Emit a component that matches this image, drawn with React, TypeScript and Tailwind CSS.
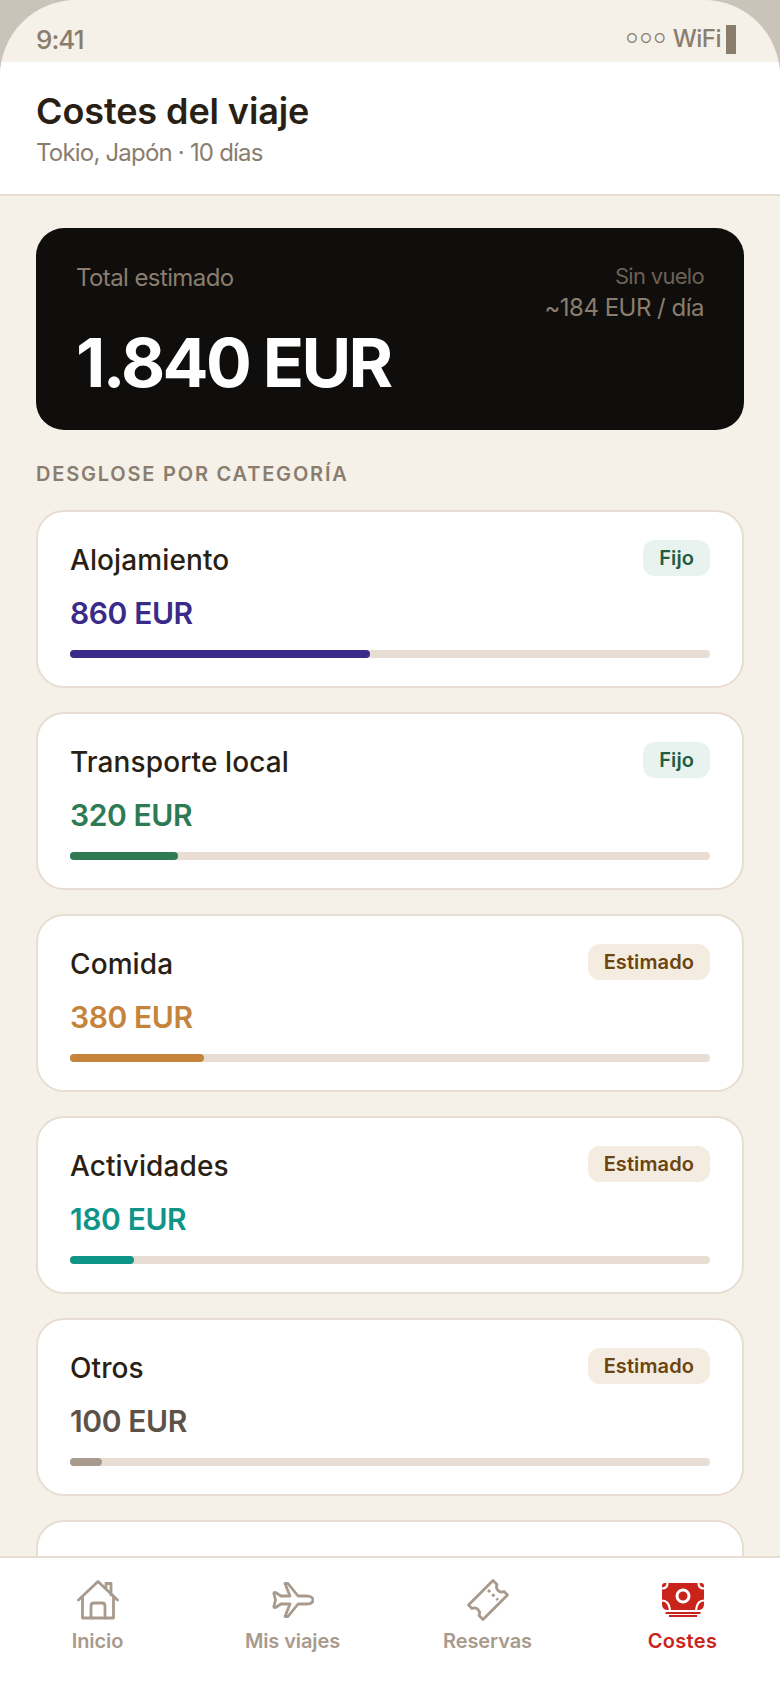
import React from "react";

const FONT = "font-['Inter','Noto_Sans',sans-serif]";

type Row = { name: string; amount: string; color: string; bar: string; w: string; tag: "Fijo" | "Estimado" };

function Card({ name, amount, color, bar, w, tag }: Row) {
  const fijo = tag === "Fijo";
  return (
    <div className="relative h-[178px] shrink-0 rounded-[28px] border-2 border-[#e8ddd2] bg-white px-[32px] pt-[26px]">
      <div className="flex items-start justify-between">
        <div className="mt-[2px] text-[28px] leading-[40px] font-medium tracking-[0.1px] text-[#2a1f14]">{name}</div>
        <div className={`mt-[2px] flex h-[36px] items-center rounded-[12px] px-[16px] text-[20px] font-semibold tracking-[0.1px] ${fijo ? "bg-[#e8f2ee] text-[#1f5c40]" : "bg-[#f4ece0] text-[#6b4410]"}`}>{tag}</div>
      </div>
      <div className={`mt-[12px] text-[30px] leading-[42px] font-semibold tracking-[-0.4px] ${color}`}>{amount}</div>
      <div className="mt-[16px] h-[8px] rounded-[4px] bg-[#e8ddd2]">
        <div className={`h-full rounded-[4px] ${bar} ${w}`} />
      </div>
    </div>
  );
}

function NavItem({ label, active, children }: { label: string; active?: boolean; children: React.ReactNode }) {
  return (
    <div className="flex flex-1 flex-col items-center">
      <div className="flex h-[48px] w-[48px] items-center justify-center">{children}</div>
      <div className={`mt-[3px] text-[20px] leading-[28px] font-semibold ${active ? "tracking-[0.3px] text-[#c8241c]" : "tracking-[-0.1px] text-[#a89a8c]"}`}>{label}</div>
    </div>
  );
}

export default function App() {
  const rows: Row[] = [
    { name: "Alojamiento", amount: "860 EUR", color: "text-[#3a2a8a]", bar: "bg-[#3a2a8a]", w: "w-[300px]", tag: "Fijo" },
    { name: "Transporte local", amount: "320 EUR", color: "text-[#2d7a55]", bar: "bg-[#2d7a55]", w: "w-[108px]", tag: "Fijo" },
    { name: "Comida", amount: "380 EUR", color: "text-[#c4843c]", bar: "bg-[#c4843c]", w: "w-[134px]", tag: "Estimado" },
    { name: "Actividades", amount: "180 EUR", color: "text-[#0f9488]", bar: "bg-[#0f9488]", w: "w-[64px]", tag: "Estimado" },
    { name: "Otros", amount: "100 EUR", color: "text-[#5c5248]", bar: "bg-[#a89a8c]", w: "w-[32px]", tag: "Estimado" },
  ];
  return (
    <div className={`h-[1688px] w-[780px] overflow-hidden bg-[#c9c3ba] ${FONT}`}>
      <div className="flex h-full flex-col overflow-hidden rounded-t-[76px] bg-[#f5f0e8]">
        <div className="flex h-[62px] shrink-0 items-center justify-between pr-[44px] pl-[36px] pt-[16px] text-[26px] font-medium text-[#8a7d6e]">
          <span className="tracking-[-1px]">9:41</span>
          <span className="flex items-center gap-[5px] text-[24px] tracking-[-0.5px]">
            <span className="text-[13px] tracking-[2px]">○○○</span>
            <span>WiFi</span>
            <span className="h-[29px] w-[10px] bg-[#8a7d6e]" />
          </span>
        </div>
        <div className="h-[134px] shrink-0 border-b-2 border-[#e8ddd2] bg-white px-[36px] pt-[27px]">
          <div className="text-[36px] leading-[44px] font-semibold tracking-[-0.1px] text-[#2a1f14]">Costes del viaje</div>
          <div className="mt-[2px] text-[24px] leading-[36px] tracking-[-0.8px] text-[#8a7d6e]">Tokio, Japón · 10 días</div>
        </div>
        <div className="min-h-0 flex-1 overflow-hidden px-[36px] pt-[32px]">
          <div className="relative h-[202px] rounded-[28px] bg-[#0f0e0c] px-[40px] pt-[33px]">
            <div className="text-[24px] leading-[34px] tracking-[-0.6px] text-[#8a7d6e]">Total estimado</div>
            <div className="mt-[27px] text-[68px] leading-[80px] font-bold tracking-[-2.6px] text-white">1.840 EUR</div>
            <div className="absolute top-[32px] right-[40px] text-right leading-[32px] text-[#8a7d6e]">
              <div className="text-[22px] tracking-[-0.7px] opacity-75">Sin vuelo</div>
              <div className="text-[24px] tracking-[-0.5px]">~184 EUR / día</div>
            </div>
          </div>
          <div className="mt-[30px] text-[20px] leading-[28px] font-semibold tracking-[1.8px] text-[#8a7d6e]">DESGLOSE POR CATEGORÍA</div>
          <div className="mt-[22px] flex flex-col gap-[24px]">
            {rows.map((r) => <Card key={r.name} {...r} />)}
            <div className="h-[178px] shrink-0 rounded-[28px] border-2 border-[#e8ddd2] bg-white" />
          </div>
        </div>
        <div className="flex h-[132px] shrink-0 border-t-2 border-[#e8ddd2] bg-white pt-[18px]">
          <NavItem label="Inicio">
            <svg width="42" height="40" viewBox="0 0 42 40" fill="none" stroke="#a89a8c" strokeWidth="2.8" strokeLinejoin="round" strokeLinecap="round">
              <path d="M1.500 20 L21 1.500 L40.500 20" />
              <path d="M29 8 V3.500 H34 V15" />
              <path d="M5.500 17 V38 H36.500 V17" />
              <path d="M14 38 V26 Q14 23 17 23 H25 Q28 23 28 26 V38" />
            </svg>
          </NavItem>
          <NavItem label="Mis viajes">
            <svg width="42" height="36" viewBox="0 0 42 36" fill="none" stroke="#a89a8c" strokeWidth="2.8" strokeLinejoin="round" strokeLinecap="round">
              <path d="M13 1.500 L16 1.500 L26 14 L36 14 Q41 15 41 18 Q41 21 36 22 L26 22 L16 34.500 L13 34.500 L18 22 L9 22 L3.500 25.500 Q1.500 26 2 24 L3.500 18 L2 12 Q1.500 10 3.500 10.500 L9 14 L18 14 Z" />
            </svg>
          </NavItem>
          <NavItem label="Reservas">
            <svg width="42" height="42" viewBox="0 0 42 42" fill="none" stroke="#a89a8c" strokeWidth="2.8" strokeLinejoin="round">
              <path d="M26 1.500 L30 5.500 Q28.500 9 31 11.500 Q33.500 14 37 12.500 L40.500 16 L16 40.500 L12 36.500 Q13.500 33 11 30.500 Q8.500 28 5 29.500 L1.500 26 Z" />
              <path d="M21 11 L31 21" strokeDasharray="3 3" />
            </svg>
          </NavItem>
          <NavItem label="Costes" active>
            <svg width="42" height="34" viewBox="0 0 42 34" fill="#c8241c">
              <path d="M3 0 H39 Q42 0 42 3 V21 Q42 27 36 27 H6 Q0 27 0 21 V3 Q0 0 3 0 Z" />
              <path d="M3.500 29 H38.500 V31 H3.500 Z M7 32 H35 V34 H7 Z" />
              <circle cx="21" cy="13" r="6" fill="none" stroke="#fff" strokeWidth="3" />
              <path d="M0 5.500 Q5.500 5.500 5.500 0 M42 5.500 Q36.500 5.500 36.500 0 M0 17.500 Q7 17.500 8 27 M42 17.500 Q35 17.500 34 27" fill="none" stroke="#fff" strokeWidth="2.200" />
            </svg>
          </NavItem>
        </div>
      </div>
    </div>
  );
}
